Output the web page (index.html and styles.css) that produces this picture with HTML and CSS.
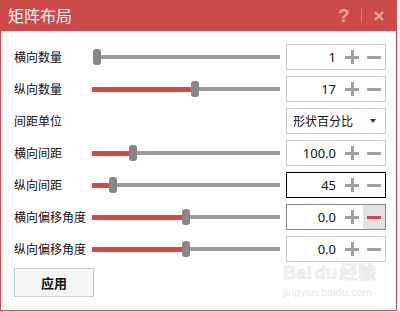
FILE: index.html
```html
<!DOCTYPE html>
<html lang="zh">
<head>
<meta charset="utf-8">
<title>矩阵布局</title>
<link rel="stylesheet" href="styles.css">
</head>
<body>
<div class="window">
  <div class="titlebar">
    <span class="title">矩阵布局</span>
    <div class="tools">
      <span class="help">?</span>
      <span class="sep"></span>
      <svg class="close" width="10" height="10" viewBox="0 0 10 10"><path d="M1 1L9 9M9 1L1 9" stroke="#eea3a3" stroke-width="2.4" fill="none"/></svg>
    </div>
  </div>
  <div class="content">
    <div class="row">
      <span class="label">横向数量</span>
      <div class="slider start"><span class="fill" style="width:0px"></span><span class="thumb"></span><span class="rest"></span></div>
      <div class="spin"><span class="value">1</span><span class="btn"><i class="plus"></i></span><span class="btn"><i class="minus"></i></span></div>
    </div>
    <div class="row">
      <span class="label">纵向数量</span>
      <div class="slider"><span class="fill" style="width:99px"></span><span class="thumb"></span><span class="rest"></span></div>
      <div class="spin"><span class="value">17</span><span class="btn"><i class="plus"></i></span><span class="btn"><i class="minus"></i></span></div>
    </div>
    <div class="row">
      <span class="label">间距单位</span>
      <div class="slider empty"></div>
      <div class="select"><span class="sel-text">形状百分比</span><span class="arrow"></span></div>
    </div>
    <div class="row">
      <span class="label">横向间距</span>
      <div class="slider"><span class="fill" style="width:37px"></span><span class="thumb"></span><span class="rest"></span></div>
      <div class="spin"><span class="value">100.0</span><span class="btn"><i class="plus"></i></span><span class="btn"><i class="minus"></i></span></div>
    </div>
    <div class="row">
      <span class="label">纵向间距</span>
      <div class="slider"><span class="fill" style="width:17px"></span><span class="thumb"></span><span class="rest"></span></div>
      <div class="spin focused"><span class="value">45</span><span class="btn"><i class="plus"></i></span><span class="btn"><i class="minus"></i></span></div>
    </div>
    <div class="row">
      <span class="label">横向偏移角度</span>
      <div class="slider"><span class="fill" style="width:90px"></span><span class="thumb"></span><span class="rest"></span></div>
      <div class="spin hovered"><span class="value">0.0</span><span class="btn"><i class="plus"></i></span><span class="btn active"><i class="minus"></i></span></div>
    </div>
    <div class="row">
      <span class="label">纵向偏移角度</span>
      <div class="slider"><span class="fill" style="width:90px"></span><span class="thumb"></span><span class="rest"></span></div>
      <div class="spin"><span class="value">0.0</span><span class="btn"><i class="plus"></i></span><span class="btn"><i class="minus"></i></span></div>
    </div>
    <div class="actions">
      <button class="apply">应用</button>
    </div>
  </div>
  <div class="watermark">
    <span class="wm-big">Bai<span class="wm-du">du</span>经验</span>
    <span class="wm-small">jingyan.baidu.com</span>
  </div>
</div>
</body>
</html>
```

FILE: styles.css
```css
* { box-sizing: border-box; }

html, body {
  margin: 0;
  padding: 0;
  background: #ffffff;
}

body {
  font-family: "Noto Sans", "Noto Sans CJK SC", sans-serif;
  color: #111;
}

.window {
  position: relative;
  width: 397px;
  height: 311px;
  border: 1px solid #cc4a4a;
  border-top: none;
  background: #fff;
}

.titlebar {
  height: 31px;
  margin: 0 -1px;
  background: #cc4a4a;
  display: flex;
  align-items: center;
  justify-content: space-between;
  padding: 0 13px 0 8px;
}

.title {
  font-family: "Noto Sans CJK SC", sans-serif;
  font-size: 16px;
  line-height: 20px;
  color: #fff;
  margin-top: -1px;
}

.tools {
  display: flex;
  align-items: center;
}

.help {
  font-family: "Liberation Sans", sans-serif;
  font-weight: bold;
  font-size: 19px;
  line-height: 20px;
  color: #eea3a3;
  width: 11px;
}

.sep {
  width: 1px;
  height: 15px;
  background: #dc7a7a;
  margin: 0 12px 0 12px;
}

.close { display: block; }

.content {
  padding: 13px 10px 13px 13px;
  display: flex;
  flex-direction: column;
  gap: 6px;
}

.row {
  display: flex;
  align-items: center;
  height: 26px;
}

.label {
  width: 78px;
  font-family: "Noto Sans CJK SC", sans-serif;
  font-size: 12px;
  line-height: 16px;
  color: #111;
  white-space: nowrap;
}

.slider {
  width: 188px;
  height: 26px;
  display: flex;
  align-items: center;
  margin-right: 6px;
}

.slider.start { padding-left: 1px; }

.fill {
  height: 5px;
  background: #cc4a4a;
}

.thumb {
  width: 8px;
  height: 16px;
  border-radius: 3px;
  background: #878787;
  flex-shrink: 0;
}

.rest {
  flex: 1;
  height: 4px;
  background: #9c9c9c;
}

.spin {
  width: 100px;
  height: 26px;
  border: 1px solid #cccccc;
  display: flex;
  align-items: stretch;
}

.spin.focused { border-color: #000; }
.spin.hovered { border-color: #8a8a8a; }

.value {
  flex: 1;
  text-align: right;
  padding-right: 5px;
  font-size: 13px;
  line-height: 24px;
  color: #111;
}

.btn {
  width: 22px;
  display: flex;
  align-items: center;
  justify-content: center;
}

.btn.active { background: #e2e2e2; }

.plus {
  position: relative;
  width: 14px;
  height: 14px;
  display: block;
}

.plus::before, .plus::after {
  content: "";
  position: absolute;
  background: #a0a0a0;
}

.plus::before { left: 0; top: 6px; width: 14px; height: 3px; }
.plus::after { left: 6px; top: 0; width: 3px; height: 14px; }

.minus {
  display: block;
  width: 14px;
  height: 3px;
  background: #a0a0a0;
  margin-top: 1px;
}

.btn.active .minus { background: #cc4a4a; }

.select {
  width: 100px;
  height: 26px;
  border: 1px solid #cccccc;
  display: flex;
  align-items: center;
  justify-content: space-between;
  padding: 0 9px 0 6px;
}

.sel-text {
  font-family: "Noto Sans CJK SC", sans-serif;
  font-size: 12px;
  line-height: 16px;
  color: #111;
}

.arrow {
  width: 0;
  height: 0;
  border-left: 3px solid transparent;
  border-right: 3px solid transparent;
  border-top: 4px solid #333;
}

.actions {
  display: flex;
}

.apply {
  width: 80px;
  height: 29px;
  border: 1px solid #cccccc;
  background: #f5f5f5;
  font-family: "Noto Sans CJK SC", sans-serif;
  font-size: 13px;
  font-weight: bold;
  color: #111;
  padding: 0;
}

.watermark {
  position: absolute;
  left: 282px;
  top: 262px;
  display: flex;
  flex-direction: column;
  align-items: flex-start;
  pointer-events: none;
}

.wm-big {
  font-family: "Liberation Sans", "Noto Sans CJK SC", sans-serif;
  font-size: 18px;
  font-weight: bold;
  line-height: 22px;
  color: #f3f3f3;
  -webkit-text-stroke: 0.6px #e4e4e4;
  letter-spacing: 0.5px;
}

.wm-du { margin: 0 2px; }

.wm-small {
  font-family: "Liberation Sans", sans-serif;
  font-size: 11px;
  line-height: 13px;
  color: #e8e8e8;
  margin-top: 2px;
}
```
